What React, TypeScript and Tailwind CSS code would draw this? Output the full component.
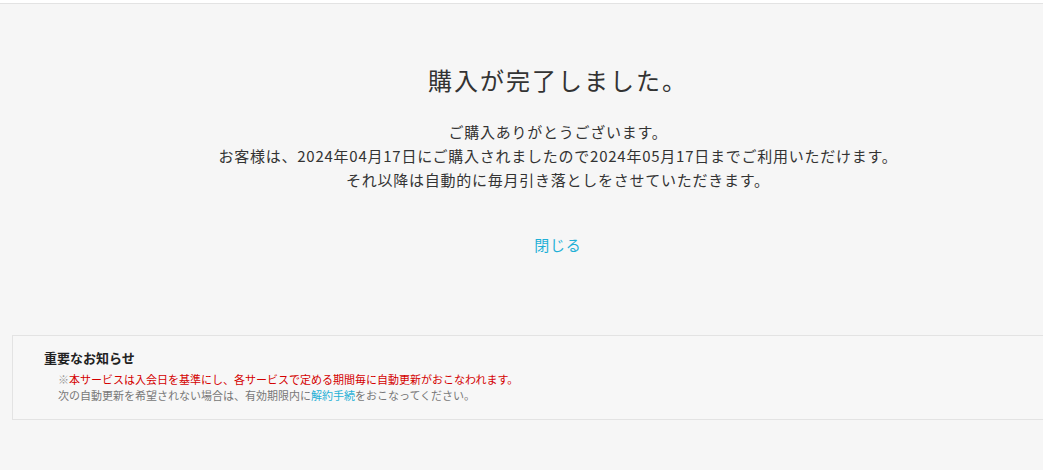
import React from 'react';

const font = 'font-["Noto_Sans_CJK_JP","Liberation_Sans",sans-serif]';

const App: React.FC = () => {
  return (
    <div className={`${font} min-h-[470px] overflow-hidden bg-white pt-[3px] text-[#333]`}>
      <div className="min-h-[467px] border-t border-[#e3e3e3] bg-[#f6f6f6]">
        <div className="ml-[12px] w-[1092px]">
          {/* Completion message */}
          <div className="flex flex-col items-center pt-[58px] text-center">
            <h1 className="text-[24px] leading-[36px] font-normal tracking-[2px] text-[#333]">
              購入が完了しました。
            </h1>
            <div className="mt-[22px] text-[15px] leading-[24px] tracking-[0.75px]">
              <p>ご購入ありがとうございます。</p>
              <p>お客様は、2024年04月17日にご購入されましたので2024年05月17日までご利用いただけます。</p>
              <p>それ以降は自動的に毎月引き落としをさせていただきます。</p>
            </div>
            <a href="#" className="mt-[41px] text-[15px] leading-[24px] tracking-[0.75px] text-[#1fb0d6]">
              閉じる
            </a>
          </div>

          {/* Notice */}
          <div className="mt-[78px] border border-[#e3e3e3] bg-[#f7f7f7] pt-[12px] pb-[16px] pl-[31px]">
            <h2 className="text-[13px] leading-[20px] font-bold text-[#222]">重要なお知らせ</h2>
            <div className="mt-[3px] pl-[14px] text-[11px] leading-[16px]">
              <p className="text-[#d40000]">
                <span className="text-[#999]">※</span>本サービスは入会日を基準にし、各サービスで定める期間毎に自動更新がおこなわれます。
              </p>
              <p className="text-[#777]">
                次の自動更新を希望されない場合は、有効期限内に<a href="#" className="text-[#1fb0d6]">解約手続</a>をおこなってください。
              </p>
            </div>
          </div>
        </div>
      </div>
    </div>
  );
};

export default App;
